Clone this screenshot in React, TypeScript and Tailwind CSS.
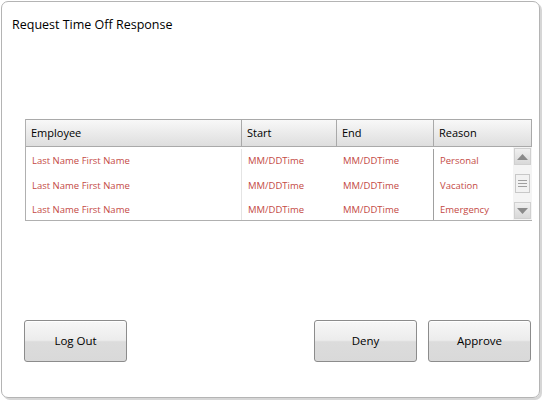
import React from "react";

const rows = [
  { name: "Last Name First Name", start: "MM/DDTime", end: "MM/DDTime", reason: "Personal" },
  { name: "Last Name First Name", start: "MM/DDTime", end: "MM/DDTime", reason: "Vacation" },
  { name: "Last Name First Name", start: "MM/DDTime", end: "MM/DDTime", reason: "Emergency" },
];

function HeadCell({ label, className }: { label: string; className: string }) {
  return (
    <div className={`h-full flex items-center pl-[5px] border-r border-[#a9a9a9] ${className}`}>
      {label}
    </div>
  );
}

function ScrollBar() {
  return (
    <div className="w-[19px] h-full flex flex-col justify-between items-center bg-[#f4f4f4] py-px">
      <div className="w-[17px] h-[17px] flex items-center justify-center border border-[#d0d0d0] bg-gradient-to-b from-[#f0f0f0] to-[#d8d8d8]">
        <svg width="11" height="6" viewBox="0 0 11 6">
          <path d="M0 6 L5.5 0 L11 6 Z" fill="#8a8a8a" />
        </svg>
      </div>
      <div className="w-[15px] h-[19px] flex flex-col items-center justify-center gap-[2px] border border-[#c8c8c8] bg-[#f2f2f2]">
        <div className="w-[9px] h-px bg-[#a0a0a0]" />
        <div className="w-[9px] h-px bg-[#a0a0a0]" />
        <div className="w-[9px] h-px bg-[#a0a0a0]" />
      </div>
      <div className="w-[17px] h-[17px] flex items-center justify-center border border-[#d0d0d0] bg-gradient-to-b from-[#f0f0f0] to-[#d8d8d8]">
        <svg width="11" height="6" viewBox="0 0 11 6">
          <path d="M0 0 L11 0 L5.5 6 Z" fill="#8a8a8a" />
        </svg>
      </div>
    </div>
  );
}

function Button({ label }: { label: string }) {
  return (
    <button className="w-[103px] h-[42px] rounded-[3px] border border-[#8c8c8c] text-[11.5px] text-black bg-[linear-gradient(to_bottom,#f7f7f7_0%,#ececec_48%,#dcdcdc_52%,#d9d9d9_100%)] shadow-[inset_0_1px_0_#ffffff]">
      {label}
    </button>
  );
}

export default function App() {
  return (
    <div className="w-[544px] h-[403px] bg-white p-px font-['Open_Sans',sans-serif]">
      <div className="w-[539px] h-[397px] rounded-[7px] border border-[#b4b4b4] shadow-[2px_2px_0_#d6d6d6] flex flex-col">
        <h1 className="pl-[10px] pt-[14px] text-[12.5px] leading-[18px] text-black">
          Request Time Off Response
        </h1>

        <div className="ml-[23px] mt-[85px] w-[507px] border-l border-b border-[#b0b0b0]">
          <div className="h-[28px] flex text-[11px] text-black border border-l-0 border-[#a9a9a9] bg-gradient-to-b from-[#f8f8f8] to-[#dedede]">
            <HeadCell label="Employee" className="w-[216px]" />
            <HeadCell label="Start" className="w-[95px]" />
            <HeadCell label="End" className="w-[97px]" />
            <div className="h-full flex items-center pl-[5px] flex-1">Reason</div>
          </div>
          <div className="flex h-[73px]">
            <div className="flex-1 flex flex-col overflow-hidden text-[9.5px] text-[#c44a45]">
              {rows.map((r, i) => (
                <div key={i} className={`h-[24.5px] shrink-0 flex ${i === 0 ? "pt-[2px] h-[26.5px]" : ""}`}>
                  <div className="w-[216px] pl-[6px] flex items-center border-r border-[#e4e4e4]">{r.name}</div>
                  <div className="w-[95px] pl-[6px] flex items-center">{r.start}</div>
                  <div className="w-[97px] pl-[6px] flex items-center border-r border-[#a0a0a0]">{r.end}</div>
                  <div className="flex-1 pl-[6px] flex items-center">{r.reason}</div>
                </div>
              ))}
            </div>
            <ScrollBar />
          </div>
        </div>

        <div className="mt-auto mb-[35px] flex items-center pl-[22px] pr-[8px]">
          <Button label="Log Out" />
          <div className="flex-1" />
          <div className="flex gap-[11px]">
            <Button label="Deny" />
            <Button label="Approve" />
          </div>
        </div>
      </div>
    </div>
  );
}
